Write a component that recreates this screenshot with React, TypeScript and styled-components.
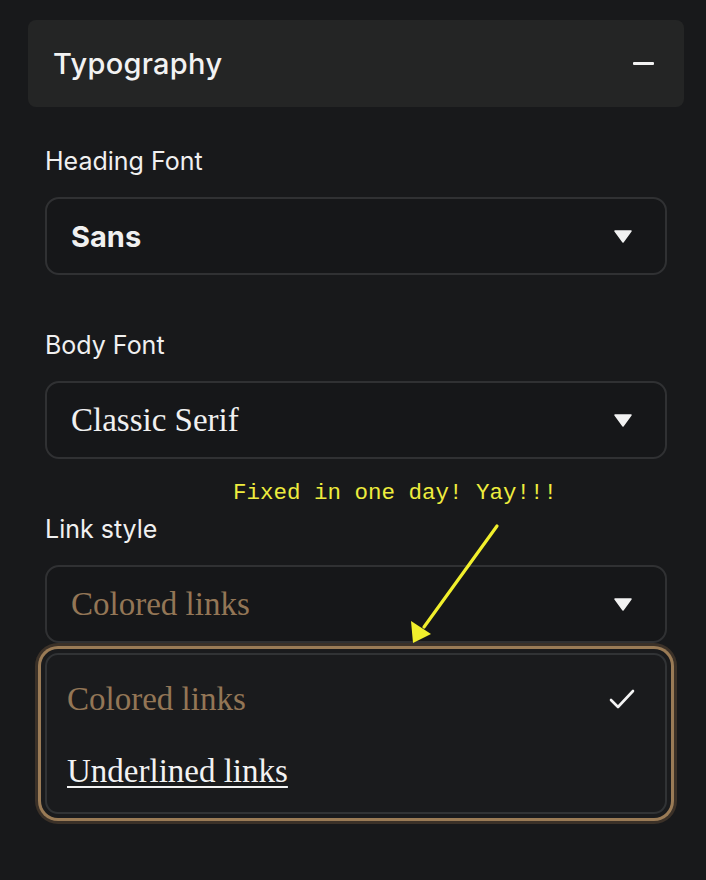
import React, { useState } from 'react'
import styled, { createGlobalStyle } from 'styled-components'

const GlobalStyle = createGlobalStyle`
  html, body {
    margin: 0;
    padding: 0;
    background: #18191b;
  }
  * {
    box-sizing: border-box;
  }
`

type Option = {
  label: string
  kind: 'colored' | 'underlined'
}

const linkOptions: Option[] = [
  { label: 'Colored links', kind: 'colored' },
  { label: 'Underlined links', kind: 'underlined' },
]

const Triangle = () => (
  <svg width="18" height="13" viewBox="0 0 18 13">
    <path d="M1 1 L17 1 L9 12 Z" fill="#f2f2f2" stroke="#f2f2f2" strokeWidth="1.5" strokeLinejoin="round" />
  </svg>
)

const Check = () => (
  <svg width="26" height="22" viewBox="0 0 26 22">
    <path d="M2 12 L9 19 L24 3" fill="none" stroke="#f4f4f4" strokeWidth="2.6" strokeLinecap="round" strokeLinejoin="round" />
  </svg>
)

export default function App(): JSX.Element {
  const [link, setLink] = useState<Option['kind']>('colored')

  return (
    <Page>
      <GlobalStyle />
      <Header>
        <Title>Typography</Title>
        <Minus />
      </Header>
      <Fields>
        <Label>Heading Font</Label>
        <Select>
          <Value $variant="sans">Sans</Value>
          <Triangle />
        </Select>

        <Label>Body Font</Label>
        <Select>
          <Value $variant="serif">Classic Serif</Value>
          <Triangle />
        </Select>

        <Label>Link style</Label>
        <Select>
          <Value $variant="colored">Colored links</Value>
          <Triangle />
        </Select>

        <Menu>
          {linkOptions.map((o) => (
            <Item key={o.kind} onClick={() => setLink(o.kind)}>
              <ItemText $kind={o.kind}>{o.label}</ItemText>
              {link === o.kind && o.kind === 'colored' ? <Check /> : null}
            </Item>
          ))}
        </Menu>
      </Fields>

      <Note>Fixed in one day! Yay!!!</Note>
      <Overlay width="706" height="880" viewBox="0 0 706 880">
        <line x1="497" y1="526" x2="424" y2="627" stroke="#f1ef2c" strokeWidth="3.2" strokeLinecap="round" />
        <path d="M413 643 L411 621 L431 634 Z" fill="#f1ef2c" />
      </Overlay>
    </Page>
  )
}

const Page = styled.div`
  position: relative;
  width: 706px;
  height: 880px;
  padding: 20px 22px 0 28px;
  background: #18191b;
  font-family: Inter, 'Noto Sans', sans-serif;
  color: #f0f0f0;
`

const Header = styled.div`
  height: 87px;
  display: flex;
  align-items: center;
  justify-content: space-between;
  padding: 0 30px 0 25px;
  background: #242525;
  border-radius: 8px;
`

const Title = styled.h2`
  margin: 0;
  font-size: 29px;
  font-weight: 500;
  color: #f2f2f2;
  letter-spacing: 0.3px;
`

const Minus = styled.span`
  display: block;
  width: 21px;
  height: 2.5px;
  background: #f2f2f2;
  border-radius: 1px;
`

const Fields = styled.div`
  padding: 0 17px;
  display: flex;
  flex-direction: column;
`

const Label = styled.div`
  margin-top: 38px;
  height: 32px;
  line-height: 32px;
  font-size: 25px;
  font-weight: 400;
  color: #f0f0f0;
  margin-bottom: 20px;
  &:not(:first-child) {
    margin-top: 54px;
  }
`

const Select = styled.div`
  height: 78px;
  display: flex;
  align-items: center;
  justify-content: space-between;
  padding: 0 33px 0 24px;
  background: #161719;
  border: 2px solid #303133;
  border-radius: 14px;
`

const Value = styled.span<{ $variant: 'sans' | 'serif' | 'colored' }>`
  font-family: ${(p) =>
    p.$variant === 'sans' ? "Inter, 'Noto Sans', sans-serif" : "'Liberation Serif', 'DejaVu Serif', serif"};
  font-size: ${(p) => (p.$variant === 'sans' ? '29px' : '33px')};
  font-weight: ${(p) => (p.$variant === 'sans' ? 700 : 400)};
  color: ${(p) => (p.$variant === 'colored' ? '#937656' : '#f0f0f0')};
`

const Menu = styled.div`
  margin-top: 10px;
  padding: 8px 0 5px;
  background: #1a1b1d;
  border: 2px solid #313335;
  border-radius: 13px;
  box-shadow: 0 0 0 4px #1a1b1d, 0 0 0 7px #9a7b56, 0 0 0 10px #3b3128;
`

const Item = styled.div`
  height: 72px;
  display: flex;
  align-items: center;
  justify-content: space-between;
  padding: 0 30px 0 20px;
  cursor: pointer;
`

const ItemText = styled.span<{ $kind: Option['kind'] }>`
  font-family: 'Liberation Serif', 'DejaVu Serif', serif;
  font-size: 33px;
  color: ${(p) => (p.$kind === 'colored' ? '#937656' : '#f2f2f2')};
  text-decoration: ${(p) => (p.$kind === 'underlined' ? 'underline' : 'none')};
  text-decoration-thickness: 2px;
  text-underline-offset: 4px;
`

const Note = styled.div`
  position: absolute;
  left: 233px;
  top: 479px;
  font-family: 'Liberation Mono', 'DejaVu Sans Mono', monospace;
  font-size: 22.5px;
  line-height: 28px;
  color: #eeec3e;
  white-space: nowrap;
`

const Overlay = styled.svg`
  position: absolute;
  left: 0;
  top: 0;
  pointer-events: none;
`
